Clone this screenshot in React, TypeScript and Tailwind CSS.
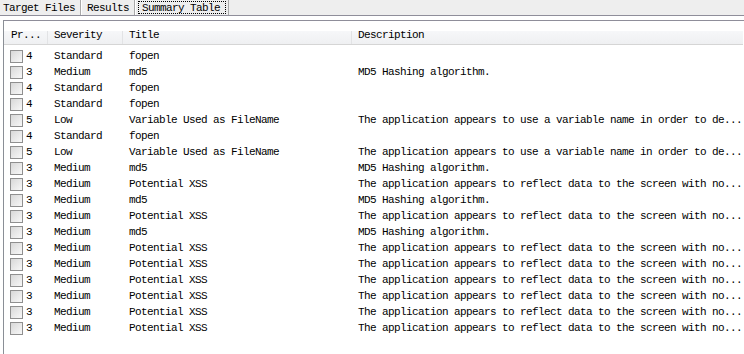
const rows: [string, string, string, string][] = [
  ['4', 'Standard', 'fopen', ''],
  ['3', 'Medium', 'md5', 'MD5 Hashing algorithm.'],
  ['4', 'Standard', 'fopen', ''],
  ['4', 'Standard', 'fopen', ''],
  ['5', 'Low', 'Variable Used as FileName', 'The application appears to use a variable name in order to de...'],
  ['4', 'Standard', 'fopen', ''],
  ['5', 'Low', 'Variable Used as FileName', 'The application appears to use a variable name in order to de...'],
  ['3', 'Medium', 'md5', 'MD5 Hashing algorithm.'],
  ['3', 'Medium', 'Potential XSS', 'The application appears to reflect data to the screen with no...'],
  ['3', 'Medium', 'md5', 'MD5 Hashing algorithm.'],
  ['3', 'Medium', 'Potential XSS', 'The application appears to reflect data to the screen with no...'],
  ['3', 'Medium', 'md5', 'MD5 Hashing algorithm.'],
  ['3', 'Medium', 'Potential XSS', 'The application appears to reflect data to the screen with no...'],
  ['3', 'Medium', 'Potential XSS', 'The application appears to reflect data to the screen with no...'],
  ['3', 'Medium', 'Potential XSS', 'The application appears to reflect data to the screen with no...'],
  ['3', 'Medium', 'Potential XSS', 'The application appears to reflect data to the screen with no...'],
  ['3', 'Medium', 'Potential XSS', 'The application appears to reflect data to the screen with no...'],
  ['3', 'Medium', 'Potential XSS', 'The application appears to reflect data to the screen with no...'],
]

const cols = 'grid grid-cols-[44px_75px_229px_1fr]'

function Checkbox() {
  return (
    <span className="w-[13px] h-[13px] border border-[#8f8f8f] bg-gradient-to-br from-[#d8d8d8] to-[#f8f8f8] shrink-0" />
  )
}

export default function App() {
  return (
    <div
      className="w-[744px] h-[354px] bg-white overflow-hidden text-[11px] tracking-[-0.6px] text-black"
      style={{ fontFamily: '"Liberation Mono", monospace' }}
    >
      {/* tab strip */}
      <div className="h-[16px] bg-[#eeeeee] border-b border-[#8f8e9a] flex items-stretch leading-[16px]">
        <div className="w-[81px] pl-[3px] border-r border-[#a9a9a9]">Target Files</div>
        <div className="w-[54px] pl-[5px] border-l border-white border-r border-r-[#a9a9a9]">Results</div>
        <div className="w-[94px] px-[2px] pt-[1px] border-l border-white border-r border-r-[#a9a9a9]">
          <div className="h-[13px] border border-dotted border-black pl-[3px] leading-[13px]">Summary Table</div>
        </div>
      </div>

      <div className="h-[4px]" />

      <div className="h-[334px] border-t border-[#8f8e9a] ml-[3px] border-l border-l-[#8a8f96] flex flex-col">
        <div className="h-[10px]" />
        <div className={`${cols} h-[14px] leading-[9px] bg-gradient-to-b from-[#f6f7f9] to-[#eff0f2] border-b border-[#d5d5d5] mr-px`}>
          <div className="pl-[7px] border-r border-[#e2e3e5]">Pr...</div>
          <div className="pl-[6px] border-r border-[#e2e3e5]">Severity</div>
          <div className="pl-[6px] border-r border-[#e2e3e5]">Title</div>
          <div className="pl-[6px]">Description</div>
        </div>
        <div className="pt-[3px]">
          {rows.map(([pri, sev, title, desc], i) => (
            <div key={i} className={`${cols} h-[16px] leading-[16px] whitespace-nowrap`}>
              <div className="pl-[6px] flex items-center gap-[3px]">
                <Checkbox />
                <span>{pri}</span>
              </div>
              <div className="pl-[6px]">{sev}</div>
              <div className="pl-[6px]">{title}</div>
              <div className="pl-[6px] overflow-hidden">{desc}</div>
            </div>
          ))}
        </div>
      </div>
    </div>
  )
}
